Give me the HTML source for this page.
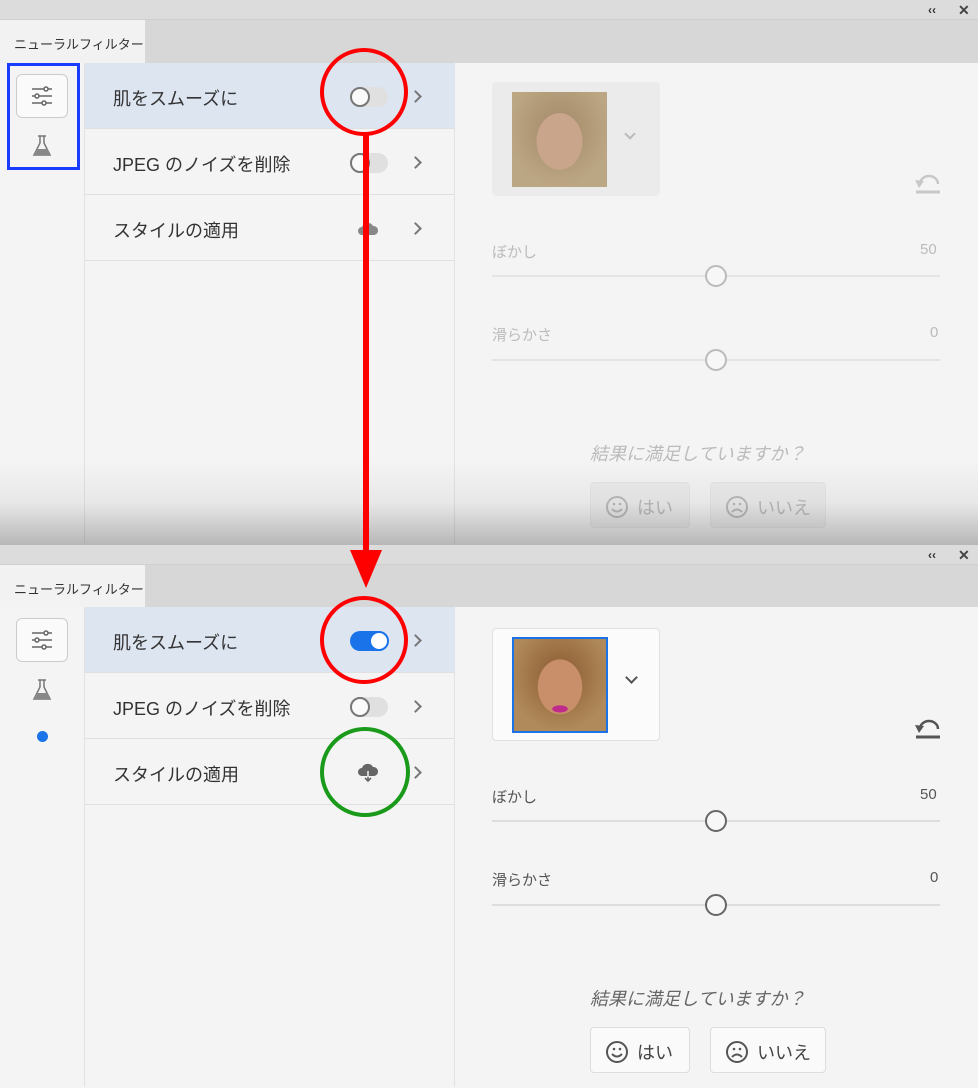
<!DOCTYPE html>
<html><head><meta charset="utf-8"><style>
*{margin:0;padding:0;box-sizing:border-box}
html,body{width:978px;height:1088px;overflow:hidden}
body{background:#f4f4f4;font-family:"Liberation Sans","Noto Sans CJK JP",sans-serif;position:relative}
.p{position:absolute;left:0;width:978px;overflow:hidden;background:#f4f4f4}
.a{position:absolute}
.tb{left:0;top:0;width:978px;height:20px;background:#dcdcdc;border-bottom:1px solid #cfcfcf}
.tabbar{left:0;top:20px;width:978px;height:43px;background:#d7d7d7}
.tab{left:0;top:20px;width:145px;height:43px;background:#f2f2f2;font-size:13px;color:#333;padding:14px 0 0 14px}
.side{left:0;top:63px;width:85px;height:480px;background:#f4f4f4;border-right:1px solid #e2e2e2}
.list{left:85px;top:63px;width:370px;height:480px;background:#f4f4f4;border-right:1px solid #e2e2e2}
.row{position:absolute;left:0;width:370px;height:66px;border-bottom:1px solid #e0e0e0;font-size:18px;color:#333;padding:22px 0 0 28px}
.chev{position:absolute;left:326px;top:29px;width:9px;height:9px;border-top:2px solid #777;border-right:2px solid #777;transform:rotate(45deg)}
.tg{position:absolute;left:265px;top:24px;width:38px;height:20px;border-radius:10px;background:#e0e0e0}
.tg i{position:absolute;left:0;top:0;width:20px;height:20px;border-radius:50%;border:2px solid #777;background:#fafafa}
.lbl{font-size:15px;color:#555}
.line{height:2px;background:#ddd}
.knob{width:22px;height:22px;border-radius:50%;border:2px solid #666;background:#f7f7f7}
.btn{height:46px;border:1px solid #ddd;border-radius:4px;background:#fafafa;font-size:18px;color:#444;padding:11px 0 0 14px}
.btn svg{vertical-align:-5px;margin-right:8px}
</style></head><body>

<!-- TOP PANEL -->
<div class="p" style="top:0;height:545px">
 <div class="a tb"></div>
 <div class="a" style="left:928px;top:3px;font-size:12px;color:#333;font-weight:bold">‹‹</div>
 <div class="a" style="left:958px;top:2px;font-size:14px;color:#444;font-weight:bold">✕</div>
 <div class="a tabbar"></div>
 <div class="a tab">ニューラルフィルター</div>
 <div class="a side">
  <div class="a" style="left:16px;top:11px;width:52px;height:44px;border:1px solid #ccc;border-radius:6px;background:#fafafa">
   <svg width="50" height="42"><g stroke="#666" stroke-width="1.5" fill="none"><path d="M15 14h20M15 21h20M15 28h20"/><circle cx="29" cy="14" r="2" fill="#fafafa"/><circle cx="20" cy="21" r="2" fill="#fafafa"/><circle cx="27" cy="28" r="2" fill="#fafafa"/></g></svg></div>
  <svg class="a" style="left:32px;top:72px" width="20" height="22"><path d="M6 1h8M8 1v7L2 20h16L12 8V1" fill="none" stroke="#777" stroke-width="1.5"/><path d="M4.5 14h11L18 20H2z" fill="#888"/></svg>
 </div>
 <div class="a list">
  <div class="row" style="top:0;background:#dde5f1">肌をスムーズに<div class="tg"><i></i></div><div class="chev"></div></div>
  <div class="row" style="top:66px">JPEG のノイズを削除<div class="tg"><i></i></div><div class="chev"></div></div>
  <div class="row" style="top:132px">スタイルの適用<svg style="position:absolute;left:272px;top:26px" width="22" height="16"><path d="M5 14a4 4 0 0 1 0-8 6 6 0 0 1 11-1 4.5 4.5 0 0 1 1 9z" fill="#888"/></svg><div class="chev"></div></div>
 </div>
 <div class="a" style="left:492px;top:82px;width:168px;height:114px;background:#ebebeb;border-radius:4px">
  <div class="a" style="left:20px;top:10px;width:95px;height:95px;background:radial-gradient(ellipse 34% 42% at 50% 52%,#c9a58c 70%,transparent 72%),radial-gradient(ellipse 55% 60% at 50% 40%,#a38868,#bca784);"></div>
  <div class="a" style="left:134px;top:48px;width:8px;height:8px;border-right:2px solid #bbb;border-bottom:2px solid #bbb;transform:rotate(45deg)"></div>
 </div>
 <svg class="a" style="left:912px;top:170px" width="30" height="26"><path d="M8 14A9 8 0 0 1 26 14" fill="none" stroke="#c8c8c8" stroke-width="2.5"/><path d="M3 10l9 1-5 7z" fill="#c8c8c8"/><path d="M4 22h24" stroke="#c8c8c8" stroke-width="3"/></svg>
 <div class="a lbl" style="left:492px;top:241px;color:#bbb">ぼかし</div>
 <div class="a lbl" style="left:920px;top:241px;color:#bbb">50</div>
 <div class="a line" style="left:492px;top:275px;width:448px;background:#e4e4e4"></div>
 <div class="a knob" style="left:705px;top:265px;border-color:#bbb"></div>
 <div class="a lbl" style="left:492px;top:324px;color:#bbb">滑らかさ</div>
 <div class="a lbl" style="left:930px;top:324px;color:#bbb">0</div>
 <div class="a line" style="left:492px;top:359px;width:448px;background:#e4e4e4"></div>
 <div class="a knob" style="left:705px;top:349px;border-color:#bbb"></div>
 <div class="a" style="left:590px;top:440px;font-size:18px;font-style:italic;color:#bbb">結果に満足していますか？</div>
 <div class="a btn" style="left:590px;top:482px;width:100px;background:#ececec;border-color:#e6e6e6;color:#bbb"><svg width="24" height="24"><g stroke="#bbb" stroke-width="2" fill="none"><circle cx="12" cy="12" r="10"/><path d="M7 14q5 5 10 0"/></g><circle cx="9" cy="9" r="1.3" fill="#bbb"/><circle cx="15" cy="9" r="1.3" fill="#bbb"/></svg>はい</div>
 <div class="a btn" style="left:710px;top:482px;width:116px;background:#ececec;border-color:#e6e6e6;color:#bbb"><svg width="24" height="24"><g stroke="#bbb" stroke-width="2" fill="none"><circle cx="12" cy="12" r="10"/><path d="M7 17q5 -5 10 0"/></g><circle cx="9" cy="9" r="1.3" fill="#bbb"/><circle cx="15" cy="9" r="1.3" fill="#bbb"/></svg>いいえ</div>
 <div class="a" style="left:0;top:460px;width:978px;height:85px;background:linear-gradient(rgba(0,0,0,0),rgba(0,0,0,.05) 50%,rgba(0,0,0,.25))"></div>
</div>

<!-- BOTTOM PANEL -->
<div class="p" style="top:545px;height:543px">
 <div class="a tb"></div>
 <div class="a" style="left:928px;top:3px;font-size:12px;color:#333;font-weight:bold">‹‹</div>
 <div class="a" style="left:958px;top:2px;font-size:14px;color:#444;font-weight:bold">✕</div>
 <div class="a tabbar" style="height:42px"></div>
 <div class="a tab" style="height:42px">ニューラルフィルター</div>
 <div class="a side" style="top:62px">
  <div class="a" style="left:16px;top:11px;width:52px;height:44px;border:1px solid #ccc;border-radius:6px;background:#fafafa">
   <svg width="50" height="42"><g stroke="#666" stroke-width="1.5" fill="none"><path d="M15 14h20M15 21h20M15 28h20"/><circle cx="29" cy="14" r="2" fill="#fafafa"/><circle cx="20" cy="21" r="2" fill="#fafafa"/><circle cx="27" cy="28" r="2" fill="#fafafa"/></g></svg></div>
  <svg class="a" style="left:32px;top:72px" width="20" height="22"><path d="M6 1h8M8 1v7L2 20h16L12 8V1" fill="none" stroke="#777" stroke-width="1.5"/><path d="M4.5 14h11L18 20H2z" fill="#888"/></svg>
  <div class="a" style="left:37px;top:124px;width:11px;height:11px;border-radius:50%;background:#1a73e8"></div>
 </div>
 <div class="a list" style="top:62px">
  <div class="row" style="top:0;background:#dde5f1">肌をスムーズに<div class="tg" style="background:#1a73e8"><i style="left:19px;border:2px solid #1a73e8;background:#fff"></i></div><div class="chev"></div></div>
  <div class="row" style="top:66px">JPEG のノイズを削除<div class="tg"><i></i></div><div class="chev"></div></div>
  <div class="row" style="top:132px">スタイルの適用<svg style="position:absolute;left:272px;top:24px" width="22" height="20"><path d="M5 13a4 4 0 0 1 0-8 6 6 0 0 1 11-1 4.5 4.5 0 0 1 1 9z" fill="#666"/><path d="M11 9v9M8 15l3 3 3-3" stroke="#666" stroke-width="1.6" fill="none"/><path d="M11 8v6" stroke="#f4f4f4" stroke-width="1.5"/></svg><div class="chev"></div></div>
 </div>
 <div class="a" style="left:492px;top:83px;width:168px;height:113px;background:#fbfbfb;border:1px solid #e0e0e0;border-radius:4px">
  <div class="a" style="left:19px;top:8px;width:96px;height:96px;border:2px solid #1a73e8;background:radial-gradient(ellipse 13% 6% at 50% 76%,#c02a8a 60%,transparent 70%),radial-gradient(ellipse 34% 42% at 50% 52%,#c98e6a 70%,transparent 72%),radial-gradient(ellipse 55% 60% at 50% 40%,#8a5a30,#b08a5a);"></div>
  <div class="a" style="left:134px;top:44px;width:9px;height:9px;border-right:2.5px solid #555;border-bottom:2.5px solid #555;transform:rotate(45deg)"></div>
 </div>
 <svg class="a" style="left:912px;top:170px" width="30" height="26"><path d="M8 14A9 8 0 0 1 26 14" fill="none" stroke="#555" stroke-width="2.5"/><path d="M3 10l9 1-5 7z" fill="#555"/><path d="M4 22h24" stroke="#555" stroke-width="3"/></svg>
 <div class="a lbl" style="left:492px;top:241px">ぼかし</div>
 <div class="a lbl" style="left:920px;top:241px">50</div>
 <div class="a line" style="left:492px;top:275px;width:448px"></div>
 <div class="a knob" style="left:705px;top:265px"></div>
 <div class="a lbl" style="left:492px;top:324px">滑らかさ</div>
 <div class="a lbl" style="left:930px;top:324px">0</div>
 <div class="a line" style="left:492px;top:359px;width:448px"></div>
 <div class="a knob" style="left:705px;top:349px"></div>
 <div class="a" style="left:590px;top:440px;font-size:18px;font-style:italic;color:#666">結果に満足していますか？</div>
 <div class="a btn" style="left:590px;top:482px;width:100px"><svg width="24" height="24"><g stroke="#555" stroke-width="2" fill="none"><circle cx="12" cy="12" r="10"/><path d="M7 14q5 5 10 0"/></g><circle cx="9" cy="9" r="1.3" fill="#555"/><circle cx="15" cy="9" r="1.3" fill="#555"/></svg>はい</div>
 <div class="a btn" style="left:710px;top:482px;width:116px"><svg width="24" height="24"><g stroke="#555" stroke-width="2" fill="none"><circle cx="12" cy="12" r="10"/><path d="M7 17q5 -5 10 0"/></g><circle cx="9" cy="9" r="1.3" fill="#555"/><circle cx="15" cy="9" r="1.3" fill="#555"/></svg>いいえ</div>
</div>

<!-- annotations -->
<svg class="a" style="left:0;top:0" width="978" height="1088">
 <rect x="8.5" y="64.5" width="70" height="104" fill="none" stroke="#1a3cff" stroke-width="3"/>
 <circle cx="364" cy="92" r="42" fill="none" stroke="#f00" stroke-width="4"/>
 <path d="M366 134V560" stroke="#f00" stroke-width="6"/>
 <path d="M350 550h32l-16 38z" fill="#f00"/>
 <circle cx="364" cy="640" r="42" fill="none" stroke="#f00" stroke-width="4"/>
 <circle cx="365" cy="772" r="43" fill="none" stroke="#1a9a1a" stroke-width="4"/>
</svg>
</body></html>
